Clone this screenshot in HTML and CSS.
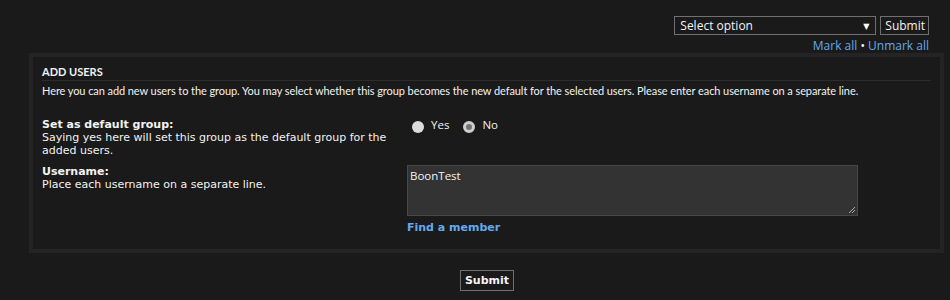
FILE: index.html
```html
<!DOCTYPE html>
<html>
<head>
<meta charset="utf-8">
<link rel="stylesheet" href="styles.css">
</head>
<body>
<div class="topbar">
  <div class="select"><span>Select option</span><span class="arrow">▼</span></div>
  <button class="btn">Submit</button>
</div>
<div class="marks"><a href="#">Mark all</a> <span class="dot">•</span> <a href="#">Unmark all</a></div>
<div class="panel">
  <h3 class="title">ADD USERS</h3>
  <p class="desc">Here you can add new users to the group. You may select whether this group becomes the new default for the selected users. Please enter each username on a separate line.</p>
  <div class="row first">
    <div class="label"><strong>Set as default group:</strong><br>Saying yes here will set this group as the default group for the added users.</div>
    <div class="field radios">
      <label class="radio"><span class="circle"></span>Yes</label>
      <label class="radio"><span class="circle on"></span>No</label>
    </div>
  </div>
  <div class="row">
    <div class="label"><strong>Username:</strong><br>Place each username on a separate line.</div>
    <div class="field">
      <div class="textarea">BoonTest<svg class="grip" width="8" height="8" viewBox="0 0 8 8"><path d="M7 1L1 7M7 4L4 7" stroke="#aaa" stroke-width="1"/></svg></div>
      <a class="find" href="#">Find a member</a>
    </div>
  </div>
</div>
<div class="bottom"><button class="btn big">Submit</button></div>
</body>
</html>
```
FILE: styles.css
```css
html, body { margin: 0; padding: 0; background: #1a1a1a; color: #f2f2f2; }
body { font-family: "Open Sans", "DejaVu Sans", sans-serif; font-size: 11px; width: 950px; height: 300px; overflow: hidden; }
a { color: #64a9ec; text-decoration: none; }

.topbar { display: flex; justify-content: flex-end; gap: 4px; padding: 16px 21px 0 0; }
.select { box-sizing: border-box; width: 202px; height: 19px; border: 1px solid #707070; display: flex; align-items: center; justify-content: space-between; padding: 0 6px 0 5px; font-size: 12px; color: #f4f4f4; }
.arrow { font-size: 8px; color: #fff; }
.btn { box-sizing: border-box; height: 19px; background: #1a1a1a; border: 1px solid #707070; color: #f4f4f4; font-family: "Open Sans", sans-serif; font-size: 12px; padding: 0 3px 0 4px; line-height: 16px; }
.marks { text-align: right; padding: 3px 21px 0 0; font-size: 12px; line-height: 15px; }
.dot { color: #fff; }

.panel { margin: 0 6px 0 29px; border: 4px solid #242424; padding: 8px 9px 15px 9px; }
.title { margin: 0; font-family: Lato, sans-serif; font-weight: bold; font-size: 11px; line-height: 14px; padding-bottom: 1px; border-bottom: 1px solid #2c2c2c; }
.desc { margin: 3px 0 0 0; font-family: Lato, sans-serif; font-size: 11px; line-height: 14px; letter-spacing: -0.08px; }

.row { display: flex; align-items: flex-start; margin-top: 8px; }
.row.first { margin-top: 20px; }
.label { width: 365px; flex: none; font-family: "DejaVu Sans", sans-serif; font-size: 11px; line-height: 13px; padding-right: 14px; box-sizing: border-box; }
.field { flex: 1; }
.radios { display: flex; align-items: flex-start; gap: 14px; padding: 0 0 0 5px; }
.radio { display: flex; align-items: center; gap: 7px; font-size: 11.5px; line-height: 14px; }
.circle { width: 12px; height: 12px; border-radius: 50%; background: #dcdcdc; box-sizing: border-box; position: relative; top: 2px; }
.circle.on { background: #737373; border: 3px solid #cfcfcf; }

.textarea { position: relative; box-sizing: border-box; width: 451px; height: 51px; background: #333333; border: 1px solid #474747; padding: 3px 2px; font-size: 11.5px; line-height: 14px; }
.grip { position: absolute; right: 1px; bottom: 1px; }
.find { display: block; margin-top: 5px; font-family: "DejaVu Sans", sans-serif; font-weight: bold; font-size: 11px; line-height: 13px; }

.bottom { display: flex; justify-content: center; padding: 17px 0 0 24px; }
.btn.big { height: 21px; font-family: "DejaVu Sans", sans-serif; font-weight: bold; font-size: 11px; padding: 0 4px; }
```
